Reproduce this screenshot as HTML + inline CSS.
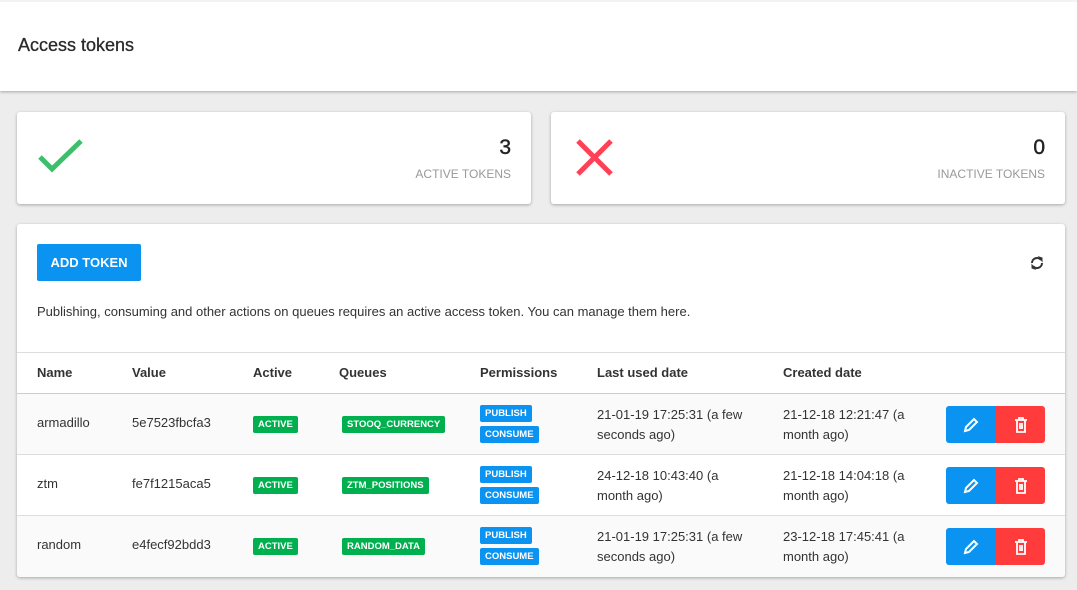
<!DOCTYPE html>
<html><head><meta charset="utf-8"><style>
*{box-sizing:border-box;margin:0;padding:0}
body{width:1077px;height:590px;overflow:hidden;background:#eeeded;font-family:"Liberation Sans",Arial,sans-serif;color:#333;position:relative}
.hdr{position:absolute;left:0;top:0;width:1077px;height:91px;background:#fff;border-top:2px solid #f3f3f3;box-shadow:0 1px 3px rgba(0,0,0,.3)}
.hdr h1{position:absolute;left:18px;top:33px;font-size:18px;font-weight:normal;color:#2a2a2a;-webkit-text-stroke:0.3px #2a2a2a}
.card{position:absolute;background:#fff;border-radius:3px;box-shadow:0 1px 3px rgba(0,0,0,.3)}
.num{position:absolute;right:20px;top:24px;font-size:21px;color:#222;-webkit-text-stroke:0.4px #222}
.lbl{position:absolute;right:20px;top:55px;font-size:12px;color:#999}
.btn{position:absolute;left:20px;top:20px;width:104px;height:37px;background:#0a93f0;color:#fff;font-size:13px;font-weight:bold;line-height:37px;text-align:center;border-radius:2px}
.txt{position:absolute;left:20px;top:80px;font-size:13px;color:#333}
.th{position:absolute;top:141px;font-size:13px;font-weight:bold;color:#333}
.line{position:absolute;left:0;width:1048px;height:1px;background:#ddd;z-index:2}
.row{position:absolute;left:0;width:1048px;height:61px}
.c{position:absolute;font-size:13px;color:#333}
.b{position:absolute;height:17px;line-height:17px;font-size:9.5px;font-weight:bold;color:#fff;padding:0 5px;border-radius:2px}
.g{background:#00b04f}.bl{background:#0a93f0}
.act{position:absolute;left:929px;top:12px;width:99px;height:37px;border-radius:3px;overflow:hidden}
.act div{position:absolute;top:0;width:50px;height:37px;display:flex;align-items:center;justify-content:center}
</style></head><body>
<div class="hdr"><h1>Access tokens</h1></div>
<div class="card" style="left:17px;top:112px;width:514px;height:92px">
<svg style="position:absolute;left:20px;top:26px" width="48" height="40" viewBox="0 0 48 40"><path d="M3 19 L15 31 L44 3" fill="none" stroke="#3cbf6b" stroke-width="5"/></svg>
<div class="num">3</div><div class="lbl">ACTIVE TOKENS</div></div>
<div class="card" style="left:551px;top:112px;width:514px;height:92px">
<svg style="position:absolute;left:24px;top:26px" width="40" height="40" viewBox="0 0 40 40"><path d="M3 3 L36 36 M36 3 L3 36" stroke="#ff4057" stroke-width="5"/></svg>
<div class="num">0</div><div class="lbl">INACTIVE TOKENS</div></div>
<div class="card" style="left:17px;top:224px;width:1048px;height:353px">
<div class="btn">ADD TOKEN</div>
<svg style="position:absolute;left:1013px;top:32px" width="14" height="14" viewBox="0 0 14 14"><path d="M2 7 A5 5 0 0 1 11 4 M12 7 A5 5 0 0 1 3 10" fill="none" stroke="#333" stroke-width="2"/><path d="M9 1 L12 2 L12 5Z M5 13 L2 12 L2 9Z" fill="#333" stroke="#333"/></svg>
<div class="txt">Publishing, consuming and other actions on queues requires an active access token. You can manage them here.</div>
<div class="line" style="top:128px"></div>
<div class="th" style="left:20px">Name</div><div class="th" style="left:115px">Value</div><div class="th" style="left:236px">Active</div><div class="th" style="left:322px">Queues</div><div class="th" style="left:463px">Permissions</div><div class="th" style="left:580px">Last used date</div><div class="th" style="left:766px">Created date</div>
<div class="line" style="top:169px;background:#ccc"></div>

<div class="row" style="top:170px;background:#fafafa">
<div class="c" style="left:20px;top:21px">armadillo</div><div class="c" style="left:115px;top:21px">5e7523fbcfa3</div>
<div class="b g" style="left:236px;top:22px">ACTIVE</div><div class="b g" style="left:325px;top:22px">STOOQ_CURRENCY</div>
<div class="b bl" style="left:463px;top:11px">PUBLISH</div><div class="b bl" style="left:463px;top:32px">CONSUME</div>
<div class="c" style="left:580px;top:11px;line-height:20px">21-01-19 17:25:31 (a few<br>seconds ago)</div>
<div class="c" style="left:766px;top:11px;line-height:20px">21-12-18 12:21:47 (a<br>month ago)</div>
<div class="act"><div style="left:0;background:#0a93f0"><svg width="16" height="16" viewBox="0 0 16 16"><path d="M2 14 L3 10 L11 2 L14 5 L6 13Z" fill="none" stroke="#fff" stroke-width="2"/></svg></div><div style="left:50px;background:#ff3b3b"><svg width="14" height="16" viewBox="0 0 14 16"><path d="M1 3h12M5 3V1h4v2M3 3v12h8V3M6 6v6M8 6v6" fill="none" stroke="#fff" stroke-width="1.8"/></svg></div></div>
</div>
<div class="row" style="top:231px;background:#fff">
<div class="c" style="left:20px;top:21px">ztm</div><div class="c" style="left:115px;top:21px">fe7f1215aca5</div>
<div class="b g" style="left:236px;top:22px">ACTIVE</div><div class="b g" style="left:325px;top:22px">ZTM_POSITIONS</div>
<div class="b bl" style="left:463px;top:11px">PUBLISH</div><div class="b bl" style="left:463px;top:32px">CONSUME</div>
<div class="c" style="left:580px;top:11px;line-height:20px">24-12-18 10:43:40 (a<br>month ago)</div>
<div class="c" style="left:766px;top:11px;line-height:20px">21-12-18 14:04:18 (a<br>month ago)</div>
<div class="act"><div style="left:0;background:#0a93f0"><svg width="16" height="16" viewBox="0 0 16 16"><path d="M2 14 L3 10 L11 2 L14 5 L6 13Z" fill="none" stroke="#fff" stroke-width="2"/></svg></div><div style="left:50px;background:#ff3b3b"><svg width="14" height="16" viewBox="0 0 14 16"><path d="M1 3h12M5 3V1h4v2M3 3v12h8V3M6 6v6M8 6v6" fill="none" stroke="#fff" stroke-width="1.8"/></svg></div></div>
</div>
<div class="row" style="top:292px;background:#fafafa;height:61px;border-radius:0 0 3px 3px">
<div class="c" style="left:20px;top:21px">random</div><div class="c" style="left:115px;top:21px">e4fecf92bdd3</div>
<div class="b g" style="left:236px;top:22px">ACTIVE</div><div class="b g" style="left:325px;top:22px">RANDOM_DATA</div>
<div class="b bl" style="left:463px;top:11px">PUBLISH</div><div class="b bl" style="left:463px;top:32px">CONSUME</div>
<div class="c" style="left:580px;top:11px;line-height:20px">21-01-19 17:25:31 (a few<br>seconds ago)</div>
<div class="c" style="left:766px;top:11px;line-height:20px">23-12-18 17:45:41 (a<br>month ago)</div>
<div class="act"><div style="left:0;background:#0a93f0"><svg width="16" height="16" viewBox="0 0 16 16"><path d="M2 14 L3 10 L11 2 L14 5 L6 13Z" fill="none" stroke="#fff" stroke-width="2"/></svg></div><div style="left:50px;background:#ff3b3b"><svg width="14" height="16" viewBox="0 0 14 16"><path d="M1 3h12M5 3V1h4v2M3 3v12h8V3M6 6v6M8 6v6" fill="none" stroke="#fff" stroke-width="1.8"/></svg></div></div>
</div>
<div class="line" style="top:230px"></div>
<div class="line" style="top:291px"></div>
</div>
</body></html>
